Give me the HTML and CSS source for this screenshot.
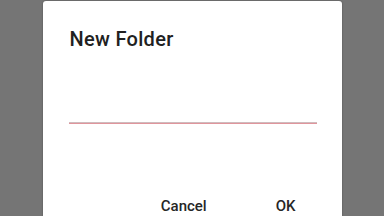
FILE: index.html
```html
<!DOCTYPE html>
<html lang="en">
<head>
<meta charset="UTF-8" />
<meta name="viewport" content="width=device-width, initial-scale=1" />
<title>New Folder</title>
<link rel="stylesheet" href="styles.css">
</head>
<body>
  <div class="dialog">
    <h2 class="title">New Folder</h2>
    <div class="field">
      <input class="name" type="text" />
    </div>
    <div class="actions">
      <button class="btn">Cancel</button>
      <button class="btn">OK</button>
    </div>
  </div>
</body>
</html>
```
FILE: styles.css
```css
html, body {
  margin: 0;
  height: 100%;
  overflow: hidden;
}

body {
  background-color: #757575;
  font-family: Roboto, 'Noto Sans', sans-serif;
  display: flex;
  justify-content: center;
  align-items: flex-start;
}

.dialog {
  background: #fff;
  width: 299px;
  height: 215px;
  margin-top: 1px;
  border-radius: 3px 3px 0 0;
  box-shadow: 0 0 2px rgba(0,0,0,0.35);
  padding: 0 25px 0 26px;
  box-sizing: border-box;
  display: flex;
  flex-direction: column;
}

.title {
  margin: 24px 0 0 1px;
  font-size: 20px;
  font-weight: 500;
  letter-spacing: 0.3px;
  color: #212121;
  line-height: 28px;
}

.field {
  margin-top: 69px;
}

.name {
  display: block;
  width: 100%;
  box-sizing: border-box;
  border: none;
  border-top: 1px solid #cfbcbe;
  border-bottom: 1px solid #e0959c;
  height: 2px;
  padding: 0;
  outline: none;
  background: transparent;
}

.actions {
  display: flex;
  justify-content: flex-end;
  gap: 69px;
  margin-top: 73px;
  padding-right: 21px;
}

.btn {
  border: none;
  background: none;
  font-family: inherit;
  font-size: 15px;
  font-weight: 500;
  color: #262626;
  padding: 0;
  cursor: pointer;
}
```
